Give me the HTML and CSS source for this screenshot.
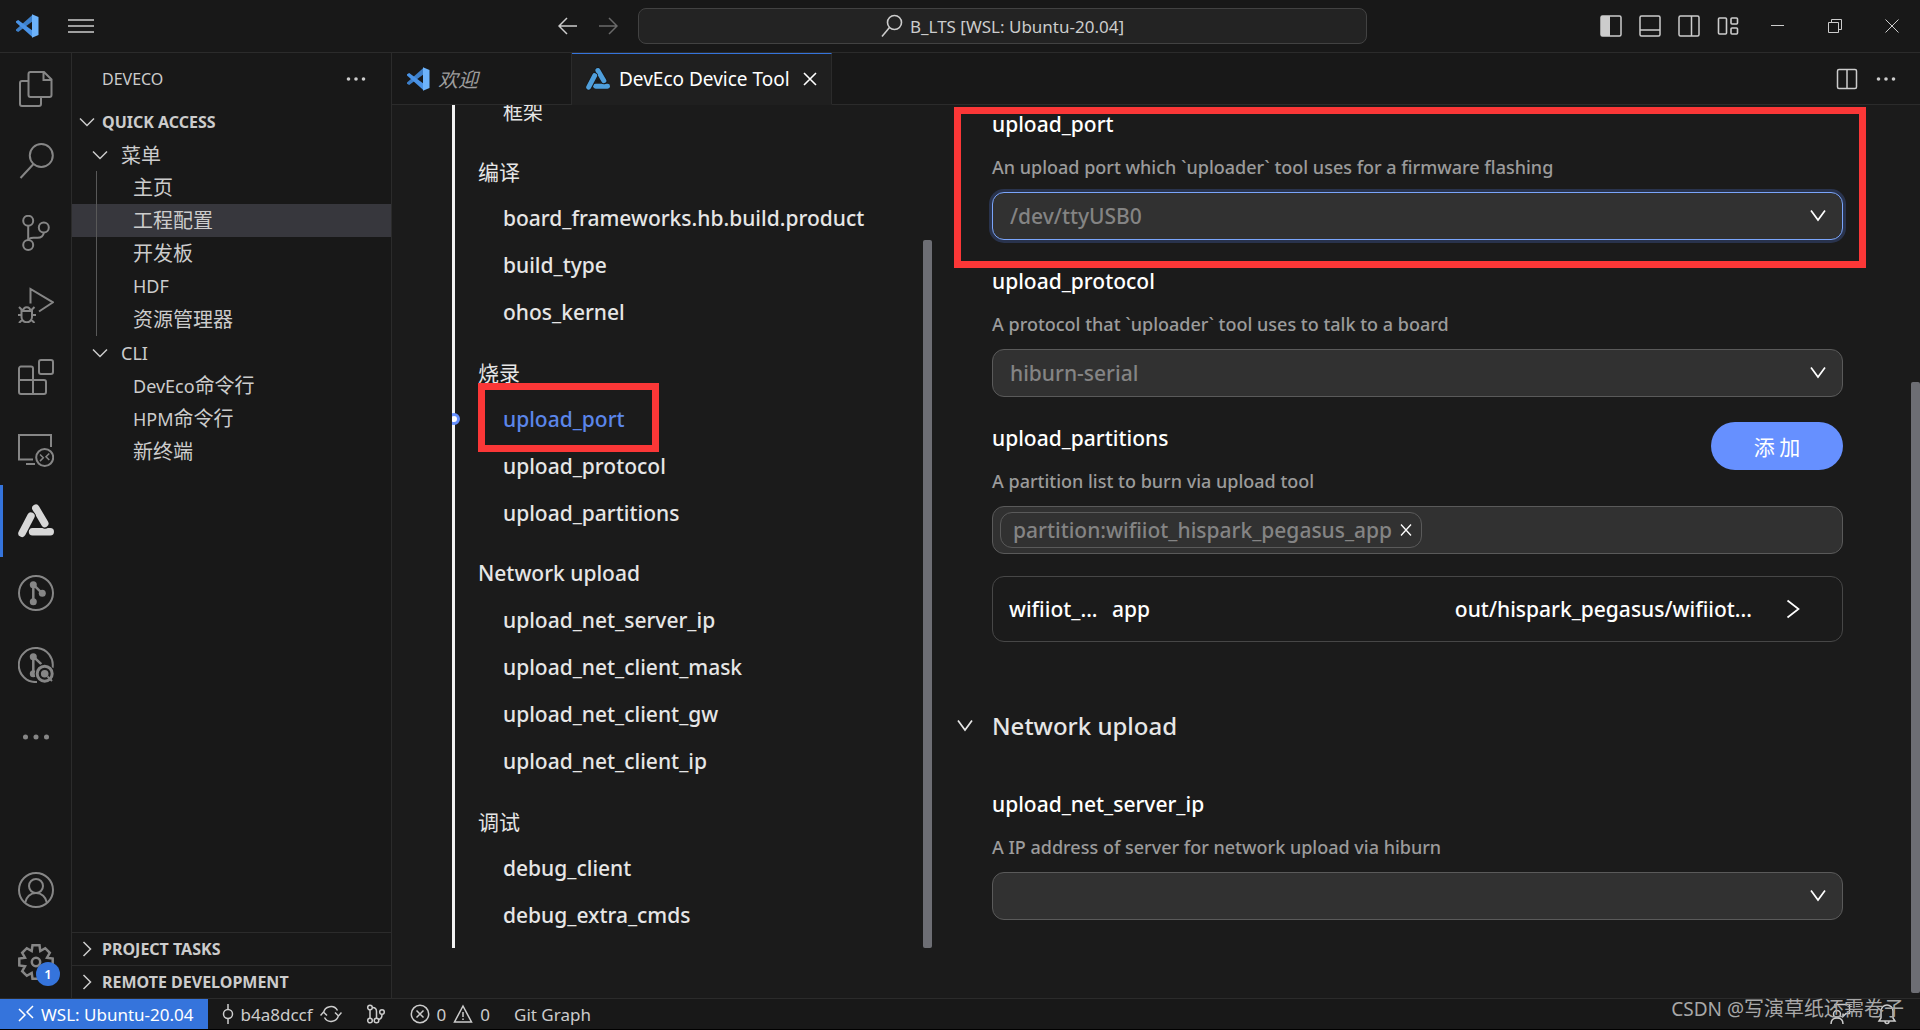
FILE: index.html
```html
<!DOCTYPE html>
<html lang="en">
<head>
  <meta charset="UTF-8">
  <meta name="viewport" content="width=device-width, initial-scale=1.0">
  <title>B_LTS [WSL: Ubuntu-20.04]</title>
  <link rel="stylesheet" href="styles.css">
</head>
<body>

  <!-- Shared icons -->
  <svg class="defs" width="0" height="0">
    <symbol id="vscode" viewBox="0 0 24 24">
      <path fill="#3d7fc9" d="M1 15.5 17 1.2v6.5L3.2 18 1 16.8z"/>
      <path fill="#4a93e6" d="M1 7.2 3.2 6 17 16.3v6.5L1 8.5z"/>
      <path fill="#6db3fb" d="M17 .3 23.5 3v18L17 23.7z"/>
    </symbol>
    <symbol id="down" viewBox="0 0 16 16">
      <path d="M1 4.5l7 7 7-7" fill="none" stroke="currentColor" stroke-width="1.5"/>
    </symbol>
    <symbol id="right" viewBox="0 0 16 16">
      <path d="M4.5 1l7 7-7 7" fill="none" stroke="currentColor" stroke-width="1.5"/>
    </symbol>
    <symbol id="vee" viewBox="0 0 16 16">
      <path d="M1 2.500l7 9.500 7-9.500" fill="none" stroke="currentColor" stroke-width="1.700"/>
    </symbol>
    <symbol id="next" viewBox="0 0 20 20">
      <path d="M4.500 1.500l11 8.500-11 8.500" fill="none" stroke="currentColor" stroke-width="1.700"/>
    </symbol>
    <symbol id="dots" viewBox="0 0 20 20">
      <g fill="currentColor"><circle cx="2.5" cy="10" r="1.8"/><circle cx="10" cy="10" r="1.8"/><circle cx="17.5" cy="10" r="1.8"/></g>
    </symbol>
    <symbol id="deveco" viewBox="0 0 36 36">
      <g fill="none" stroke-linecap="round">
        <path d="M14.5 28.8H32.3" stroke="currentColor" stroke-width="7.4"/>
        <path d="M17.8 5.2 27.3 21" class="gap" stroke-width="9.6"/>
        <path d="M17.8 5.2 26.8 20.5" stroke="currentColor" stroke-width="7.4"/>
        <path d="M13 13 4 30.3" class="gap" stroke-width="9.6"/>
        <path d="M13 13 4 30.3" stroke="currentColor" stroke-width="7.4"/>
      </g>
      <circle cx="18" cy="21" r="2.8" class="hole"/>
    </symbol>
  </svg>

  <!-- Title bar -->
  <header class="titlebar">
    <div class="title-left">
      <svg class="i24"><use href="#vscode"/></svg>
      <button class="icon-btn" aria-label="Menu">
        <svg width="26" height="26" viewBox="0 0 26 26"><path d="M0 7h26M0 13h26M0 19h26" stroke="currentColor" stroke-width="1.6"/></svg>
      </button>
    </div>
    <div class="title-center">
      <button class="icon-btn" aria-label="Back">
        <svg width="20" height="20" viewBox="0 0 20 20"><path d="M19 10H1.5M9 2l-8 8 8 8" fill="none" stroke="currentColor" stroke-width="1.5"/></svg>
      </button>
      <button class="icon-btn dim" aria-label="Forward">
        <svg width="20" height="20" viewBox="0 0 20 20"><path d="M1 10h17.5M11 2l8 8-8 8" fill="none" stroke="currentColor" stroke-width="1.5"/></svg>
      </button>
      <button class="command">
        <svg width="22" height="24" viewBox="0 0 22 24"><g fill="none" stroke="currentColor" stroke-width="1.6"><circle cx="13.5" cy="8.5" r="7"/><path d="M8.5 13.5 1 22.5"/></g></svg>
        <span>B_LTS [WSL: Ubuntu-20.04]</span>
      </button>
    </div>
    <div class="title-right">
      <div class="layouts">
        <button class="icon-btn" aria-label="Side bar"><svg width="22" height="22" viewBox="0 0 22 22"><rect x="1" y="1" width="20" height="20" rx="1.5" fill="none" stroke="currentColor" stroke-width="1.5"/><path d="M1 1h9v20H1z" fill="currentColor"/></svg></button>
        <button class="icon-btn" aria-label="Panel"><svg width="22" height="22" viewBox="0 0 22 22"><g fill="none" stroke="currentColor" stroke-width="1.5"><rect x="1" y="1" width="20" height="20" rx="1.5"/><path d="M1 15h20"/></g></svg></button>
        <button class="icon-btn" aria-label="Secondary side bar"><svg width="22" height="22" viewBox="0 0 22 22"><g fill="none" stroke="currentColor" stroke-width="1.5"><rect x="1" y="1" width="20" height="20" rx="1.5"/><path d="M13.5 1v20"/></g></svg></button>
        <button class="icon-btn" aria-label="Layout"><svg width="22" height="22" viewBox="0 0 22 22"><g fill="none" stroke="currentColor" stroke-width="1.6"><rect x="1.5" y="3" width="8" height="16" rx="1"/><rect x="14" y="3" width="6.5" height="6" rx="1"/><rect x="14" y="13" width="6.5" height="6" rx="1"/></g></svg></button>
      </div>
      <button class="win-btn" aria-label="Minimize"><svg width="14" height="14" viewBox="0 0 14 14"><path d="M0 6.5h13" stroke="currentColor"/></svg></button>
      <button class="win-btn" aria-label="Restore"><svg width="14" height="14" viewBox="0 0 14 14"><path d="M.5 3.5h10v10H.5zM3.5 3V.5h10v10H11" fill="none" stroke="currentColor"/></svg></button>
      <button class="win-btn" aria-label="Close"><svg width="14" height="14" viewBox="0 0 14 14"><path d="M.5.5l13 13M13.5.5l-13 13" stroke="currentColor"/></svg></button>
    </div>
  </header>

  <main class="workbench">
    <!-- Activity bar -->
    <nav class="activity">
      <button aria-label="Explorer"><svg viewBox="0 0 36 36"><path d="M12.5 1h13.5l7.500 7.500V24a2 2 0 0 1-2 2h-19a2 2 0 0 1-2-2V3a2 2 0 0 1 2-2zM25.500 1v8h8M10 10H4a2 2 0 0 0-2 2v21a2 2 0 0 0 2 2h17a2 2 0 0 0 2-2v-6"/></svg></button>
      <button aria-label="Search"><svg viewBox="0 0 36 36"><circle cx="23.300" cy="12.500" r="11.500"/><path d="M15.500 21 2.500 35"/></svg></button>
      <button aria-label="Source control"><svg viewBox="0 0 36 36"><circle cx="10.200" cy="5.800" r="5"/><circle cx="25.800" cy="12.600" r="5"/><circle cx="10.200" cy="30" r="5"/><path d="M10.200 11v14M25.800 17.600c-.5 3.400-2.800 5.200-6.300 5.200h-4c-3 0-5 1-5.300 3"/></svg></button>
      <button aria-label="Run"><svg viewBox="0 0 36 36"><path d="M12.500 16.500V2L35 15.300 21 24.500M3.500 24h10.500v6a5.200 5.200 0 0 1-10.500 0zM5 24a3.800 4.500 0 0 1 7.500 0M0 28h3.500M14 28h4M1 20l3 3M16.500 20l-3 3M1 36l3.500-3.500M16.500 36l-3.500-3.500"/></svg></button>
      <button aria-label="Extensions"><svg viewBox="0 0 36 36"><path d="M3 7.500h10a2 2 0 0 1 2 2V21h11a2 2 0 0 1 2 2v10a2 2 0 0 1-2 2H3a2 2 0 0 1-2-2V9.500a2 2 0 0 1 2-2zM1 21h14v14"/><rect x="21" y="1" width="14" height="14" rx="2"/></svg></button>
      <button aria-label="Remote explorer"><svg viewBox="0 0 36 36"><path d="M15 28.500H1V4h32v12M8 33h9"/><circle cx="26.700" cy="26.500" r="8.500"/><path d="M22 23.500l3.300 3.300-3.300 3.300M31.300 22.500l-3.300 3.200 3.300 3.300" stroke-width="1.500"/></svg></button>
      <button class="active" aria-label="DevEco"><svg class="logo"><use href="#deveco"/></svg></button>
      <button aria-label="GitLens"><svg viewBox="0 0 36 36"><circle cx="18" cy="18" r="17"/><path d="M15.300 9.700v17M15.300 9.700l9 8.600" stroke-width="2.500"/><g class="solid"><circle cx="15.300" cy="9.700" r="3.500"/><circle cx="15.300" cy="26.700" r="3.500"/><circle cx="24.300" cy="18.300" r="3.500"/></g></svg></button>
      <button aria-label="GitLens inspect"><svg viewBox="0 0 36 36"><path d="M34.500 21A17 17 0 1 0 19 35"/><path d="M15.300 9.700v17M15.300 9.700l8 7.500" stroke-width="2.500"/><g class="solid"><circle cx="15.300" cy="9.700" r="3.500"/><circle cx="15.300" cy="26.700" r="3.500"/><circle cx="26.700" cy="26.700" r="10" class="hole"/><circle cx="26.700" cy="26.700" r="3.800"/></g><circle cx="26.700" cy="26.700" r="7.500" stroke-width="3"/><path d="M29.500 29.500l4.500 4.500"/></svg></button>
      <button aria-label="More"><svg class="more"><use href="#dots"/></svg></button>
      <span class="spacer"></span>
      <button aria-label="Account"><svg viewBox="0 0 36 36"><circle cx="18" cy="18" r="17"/><circle cx="18" cy="14" r="7"/><path d="M7 31c1-6 5.500-10 11-10s10 4 11 10"/></svg></button>
      <button aria-label="Settings"><svg viewBox="0 0 36 36"><path stroke-width="2.500" d="M14.500 1.300h7l.8 5.700 4.900-2.800 4.600 4.600-2.800 4.900 5.700.8v7l-5.700.8 2.800 4.900-4.600 4.600-4.900-2.800-.8 5.700h-7l-.8-5.700-4.900 2.800-4.600-4.600L7 22.300l-5.700-.8v-7l5.700-.8-2.800-4.900 4.600-4.600L13.700 7z"/><circle cx="18" cy="18" r="4.200" stroke-width="2.500"/></svg><span class="badge">1</span></button>
    </nav>

    <!-- Side bar -->
    <aside class="sidebar">
      <div class="side-title">
        <h2>DEVECO</h2>
        <button class="icon-btn" aria-label="More actions"><svg class="i20"><use href="#dots"/></svg></button>
      </div>
      <button class="pane-head"><svg class="i16"><use href="#down"/></svg>QUICK ACCESS</button>
      <ul class="tree">
        <li class="branch"><svg class="i16"><use href="#down"/></svg><span lang="zh">菜单</span></li>
        <li>
          <ul class="leaves guide">
            <li lang="zh">主页</li>
            <li lang="zh" class="selected">工程配置</li>
            <li lang="zh">开发板</li>
            <li>HDF</li>
            <li lang="zh">资源管理器</li>
          </ul>
        </li>
        <li class="branch"><svg class="i16"><use href="#down"/></svg>CLI</li>
        <li>
          <ul class="leaves">
            <li>DevEco<span lang="zh">命令行</span></li>
            <li>HPM<span lang="zh">命令行</span></li>
            <li lang="zh">新终端</li>
          </ul>
        </li>
      </ul>
      <button class="pane-head line"><svg class="i16"><use href="#right"/></svg>PROJECT TASKS</button>
      <button class="pane-head line"><svg class="i16"><use href="#right"/></svg>REMOTE DEVELOPMENT</button>
    </aside>

    <!-- Editor -->
    <section class="editor">
      <div class="tabs">
        <div class="tab welcome"><svg class="i24"><use href="#vscode"/></svg><em lang="zh">欢迎</em></div>
        <div class="tab current">
          <svg class="i24 blue"><use href="#deveco"/></svg>
          <span>DevEco Device Tool</span>
          <button class="icon-btn" aria-label="Close tab"><svg width="14" height="14" viewBox="0 0 14 14"><path d="M1 1l12 12M13 1L1 13" stroke="currentColor" stroke-width="1.600"/></svg></button>
        </div>
        <div class="tab-actions">
          <button class="icon-btn" aria-label="Split editor"><svg width="22" height="22" viewBox="0 0 22 22"><g fill="none" stroke="currentColor" stroke-width="1.500"><rect x="1.500" y="1.500" width="19" height="19" rx="1.500"/><path d="M11 1.500v19"/></g></svg></button>
          <button class="icon-btn" aria-label="More actions"><svg class="i20"><use href="#dots"/></svg></button>
        </div>
      </div>

      <div class="page">
        <nav class="anchors">
          <ul>
            <li><a href="#" lang="zh">框架</a></li>
          </ul>
          <h3 lang="zh">编译</h3>
          <ul>
            <li><a href="#">board_frameworks.hb.build.product</a></li>
            <li><a href="#">build_type</a></li>
            <li><a href="#">ohos_kernel</a></li>
          </ul>
          <h3 lang="zh">烧录</h3>
          <ul>
            <li class="here"><a href="#">upload_port</a><span class="mark"></span></li>
            <li><a href="#">upload_protocol</a></li>
            <li><a href="#">upload_partitions</a></li>
          </ul>
          <h3>Network upload</h3>
          <ul>
            <li><a href="#">upload_net_server_ip</a></li>
            <li><a href="#">upload_net_client_mask</a></li>
            <li><a href="#">upload_net_client_gw</a></li>
            <li><a href="#">upload_net_client_ip</a></li>
          </ul>
          <h3 lang="zh">调试</h3>
          <ul>
            <li><a href="#">debug_client</a></li>
            <li><a href="#">debug_extra_cmds</a></li>
          </ul>
          <span class="thumb"></span>
        </nav>

        <form class="settings">
          <div class="field">
            <label for="port">upload_port</label>
            <p>An upload port which `uploader` tool uses for a firmware flashing</p>
            <div class="select focus">
              <select id="port"><option>/dev/ttyUSB0</option></select>
              <svg class="i16"><use href="#vee"/></svg>
            </div>
            <span class="mark"></span>
          </div>
          <div class="field">
            <label for="protocol">upload_protocol</label>
            <p>A protocol that `uploader` tool uses to talk to a board</p>
            <div class="select">
              <select id="protocol"><option>hiburn-serial</option></select>
              <svg class="i16"><use href="#vee"/></svg>
            </div>
          </div>
          <div class="field">
            <div class="with-button">
              <div>
                <label for="partition">upload_partitions</label>
                <p>A partition list to burn via upload tool</p>
              </div>
              <button type="button" class="add" lang="zh">添 加</button>
            </div>
            <div class="tags">
              <span class="tag">partition:wifiiot_hispark_pegasus_app
                <button type="button" class="icon-btn" id="partition" aria-label="Remove"><svg width="12" height="12" viewBox="0 0 12 12"><path d="M1 .5l10 11M11 .5L1 11.500" stroke="currentColor" stroke-width="1.300"/></svg></button>
              </span>
            </div>
            <button type="button" class="card">
              <span class="name">wifiiot_...</span>
              <span class="kind">app</span>
              <span>out/hispark_pegasus/wifiiot...</span>
              <svg class="i20"><use href="#next"/></svg>
            </button>
          </div>
          <h2><svg class="i16"><use href="#vee"/></svg>Network upload</h2>
          <div class="field">
            <label for="server">upload_net_server_ip</label>
            <p>A IP address of server for network upload via hiburn</p>
            <div class="select">
              <select id="server"><option></option></select>
              <svg class="i16"><use href="#vee"/></svg>
            </div>
          </div>
          <span class="thumb"></span>
        </form>
      </div>
    </section>
  </main>

  <!-- Status bar -->
  <footer class="status">
    <button class="remote"><svg width="16" height="18" viewBox="0 0 16 18"><path d="M1 4l6 6-6 6M15 1L9 7l6 6" fill="none" stroke="currentColor" stroke-width="1.500"/></svg>WSL: Ubuntu-20.04</button>
    <button class="commit">
      <svg width="12" height="20" viewBox="0 0 12 20"><g fill="none" stroke="currentColor" stroke-width="1.500"><circle cx="6" cy="10" r="4.500"/><path d="M6 0v5.500M6 14.500V20"/></g></svg>
      b4a8dccf
      <svg width="22" height="20" viewBox="0 0 22 20"><path d="M3.500 9a7.500 7.500 0 0 1 14-2.500M18.500 11a7.500 7.500 0 0 1-14 2.500M.5 11.500l3-3.500 3.500 3.500M21.500 8.500l-3 3.500-3.500-3.500" fill="none" stroke="currentColor" stroke-width="1.500"/></svg>
    </button>
    <button aria-label="Graph"><svg width="20" height="20" viewBox="0 0 20 20"><g fill="none" stroke="currentColor" stroke-width="1.500"><circle cx="4" cy="3.500" r="2.300"/><circle cx="4" cy="16.500" r="2.300"/><circle cx="10.500" cy="16.500" r="2.300"/><circle cx="16" cy="8" r="2.300"/><path d="M4 6v8M6.500 3.500q4 0 4 4V14M16 10.500q0 4.500-3.500 5"/></g></svg></button>
    <button class="problems">
      <svg width="20" height="20" viewBox="0 0 20 20"><g fill="none" stroke="currentColor" stroke-width="1.500"><circle cx="10" cy="10" r="8.700"/><path d="M6.500 6.500l7 7M13.500 6.500l-7 7"/></g></svg>0
      <svg width="20" height="20" viewBox="0 0 20 20"><path d="M10 2l8.500 16h-17zM10 8v5M10 14.500v1.500" fill="none" stroke="currentColor" stroke-width="1.500"/></svg>0
    </button>
    <button>Git Graph</button>
    <div class="status-right">
      <svg width="22" height="22" viewBox="0 0 22 22"><g fill="none" stroke="currentColor" stroke-width="1.500"><circle cx="8" cy="11" r="3.500"/><path d="M2 21c0-4 2.500-6 6-6s6 2 6 6M6 5V1.500h14.500v9H17l-3 3v-3"/></g></svg>
      <svg width="22" height="22" viewBox="0 0 22 22"><path d="M3 18h16l-2-3V8a6 6 0 0 0-12 0v7zM9 18.500a2 2 0 0 0 4 0" fill="none" stroke="currentColor" stroke-width="1.500"/></svg>
    </div>
    <span class="watermark">CSDN @<span lang="zh">写演草纸还需卷子</span></span>
  </footer>
</body>
</html>
```
FILE: styles.css
```css
*, *::before {
  box-sizing: border-box;
}

body {
  margin: 0;
  height: 100vh;
  display: flex;
  flex-direction: column;
  overflow: hidden;
  background: #181818;
  color: #cccccc;
  font-family: "Noto Sans", "Noto Sans CJK SC", sans-serif;
  font-size: 18px;
  border-bottom: 1px solid #000;
}

[lang="zh"] {
  font-family: "Noto Sans CJK SC", sans-serif;
  font-size: 20px;
  font-weight: 400;
}

ul {
  list-style: none;
  margin: 0;
  padding: 0;
}

h2, h3, p {
  margin: 0;
  font-weight: inherit;
}

button {
  font: inherit;
  color: inherit;
  background: none;
  border: none;
  padding: 0;
}

svg {
  display: block;
  flex: none;
}

.defs { position: absolute; }
.i16 { width: 16px; height: 16px; }
.i20 { width: 20px; height: 20px; }
.i24 { width: 24px; height: 24px; }
.gap { stroke: #181818; }
.hole { fill: #181818; }
.blue { color: #4f9fdc; }

.spacer {
  flex: 1;
}

/* Title bar */
.titlebar {
  display: flex;
  height: 53px;
  flex: none;
  align-items: center;
  border-bottom: 1px solid #2b2b2b;
}

.title-left {
  flex: 1;
  display: flex;
  align-items: center;
  gap: 29px;
  padding-left: 5px;
}

.title-left .i24 {
  margin-left: 10px;
}

.title-center {
  display: flex;
  align-items: center;
  gap: 20px;
}

.dim {
  color: #6a6a6a;
}

.command {
  display: flex;
  align-items: center;
  justify-content: center;
  gap: 7px;
  width: 38vw;
  height: 36px;
  border: 1px solid #424242;
  border-radius: 8px;
  background: #232323;
  font-size: 17px;
}

.title-right {
  flex: 1;
  display: flex;
  align-items: center;
  justify-content: flex-end;
}

.layouts {
  display: flex;
  gap: 17px;
  padding-right: 10px;
}

.win-btn {
  width: 57px;
  display: flex;
  justify-content: center;
}

/* Workbench */
.workbench {
  flex: 1;
  min-height: 0;
  display: flex;
}

.activity {
  width: 72px;
  flex: none;
  display: flex;
  flex-direction: column;
  border-right: 1px solid #2b2b2b;
  color: #868686;
}

.activity button {
  position: relative;
  height: 72px;
  padding-left: 18px;
}

.activity svg {
  width: 36px;
  height: 36px;
  fill: none;
  stroke: currentColor;
  stroke-width: 2;
}

.activity .solid {
  fill: currentColor;
  stroke: none;
}

.activity .solid .hole {
  fill: #181818;
}

.activity .more {
  width: 28px;
  height: 28px;
  margin-left: 4px;
  stroke: none;
}

.activity .logo {
  stroke: none;
}

.activity .active {
  color: #d7d7d7;
  border-left: 3px solid #3574dc;
  padding-left: 15px;
}

.badge {
  position: absolute;
  left: 36px;
  top: 36px;
  width: 24px;
  height: 24px;
  border-radius: 50%;
  background: #3574dc;
  color: #fff;
  font-size: 13px;
  font-weight: 600;
  line-height: 24px;
  text-align: center;
}

/* Side bar */
.sidebar {
  width: 320px;
  flex: none;
  display: flex;
  flex-direction: column;
  border-right: 1px solid #2b2b2b;
}

.side-title {
  height: 52px;
  display: flex;
  align-items: center;
  justify-content: space-between;
  padding: 0 25px 0 30px;
}

.side-title h2 {
  font-size: 16px;
}

.pane-head {
  display: flex;
  align-items: center;
  gap: 7px;
  height: 33px;
  padding-left: 7px;
  font-size: 16px;
  font-weight: 700;
}

.line {
  border-top: 1px solid #2b2b2b;
}

.tree {
  flex: 1;
}

.branch {
  display: flex;
  align-items: center;
  gap: 13px;
  height: 33px;
  padding-left: 20px;
}

.leaves {
  position: relative;
}

.leaves li {
  height: 33px;
  line-height: 32px;
  padding-left: 61px;
}

.guide::before {
  content: "";
  position: absolute;
  left: 24px;
  top: 0;
  bottom: 0;
  width: 1px;
  background: #585858;
}

.selected {
  background: #37373d;
}

/* Tabs */
.editor {
  flex: 1;
  min-width: 0;
  display: flex;
  flex-direction: column;
}

.tabs {
  display: flex;
  height: 52px;
  flex: none;
}

.tab {
  display: flex;
  align-items: center;
  padding: 0 14px;
  border-right: 1px solid #2b2b2b;
  border-bottom: 1px solid #2b2b2b;
}

.welcome {
  width: 180px;
  gap: 8px;
  color: #9d9d9d;
}

.current {
  gap: 9px;
  color: #fff;
  background: #1f1f1f;
  border-top: 1px solid #3574dc;
  border-bottom-color: #1f1f1f;
  font-size: 19px;
}

.current .icon-btn {
  margin-left: 4px;
}

.tab-actions {
  flex: 1;
  display: flex;
  align-items: center;
  justify-content: flex-end;
  gap: 18px;
  padding-right: 24px;
  border-bottom: 1px solid #2b2b2b;
}

/* Page */
.page {
  flex: 1;
  min-height: 0;
  display: flex;
  background: #1b1b1b;
  font-size: 21px;
  font-weight: 500;
}

.anchors {
  position: relative;
  width: 480px;
  margin: 0 22px 50px 60px;
  padding: 0 0 9px 26px;
  flex: none;
  display: flex;
  flex-direction: column;
  justify-content: flex-end;
  overflow: hidden;
  box-shadow: inset 3px 0 #f2f2f2;
  color: #e6e6e6;
}

.anchors h3 {
  margin-top: 13px;
  font-size: 21px;
  line-height: 47px;
}

.anchors li {
  position: relative;
  height: 47px;
  line-height: 47px;
  padding-left: 25px;
}

.anchors a {
  color: inherit;
  text-decoration: none;
}

.anchors .here {
  color: #5b86ea;
}

/* progress dot on the rail */
.here::before {
  content: "";
  position: absolute;
  left: -30px;
  top: 17px;
  width: 12px;
  height: 12px;
  border: 3px solid #6690ff;
  border-radius: 50%;
  background: #fff;
}

.mark {
  position: absolute;
  border: 7px solid #fb3737;
  pointer-events: none;
}

.here .mark {
  left: 0;
  top: -13px;
  width: 181px;
  height: 69px;
}

.thumb {
  position: absolute;
  right: 0;
  width: 9px;
  border-radius: 2px;
  background: #6d6e74;
}

.anchors .thumb {
  top: 16%;
  bottom: 0;
}

/* Settings form */
.settings {
  position: relative;
  flex: 1;
  padding: 3px 77px 0 38px;
}

.settings .thumb {
  top: 31%;
  bottom: 5px;
}

.field {
  position: relative;
  margin-bottom: 25px;
}

.field label {
  display: block;
  line-height: 32px;
  color: #fff;
}

.field p {
  margin: 13px 0 10px;
  font-size: 18px;
  line-height: 29px;
  color: #9b9b9b;
}

.field > .mark {
  inset: -1px -23px -28px -38px;
}

.select {
  position: relative;
}

.select select {
  display: block;
  width: 100%;
  height: 48px;
  padding: 0 17px;
  appearance: none;
  border: 1px solid #5a5a5a;
  border-radius: 12px;
  background: #313131;
  color: #848484;
  font: inherit;
}

.focus select {
  border-color: #7aa5fb;
  box-shadow: 0 0 0 3px #29334d;
}

.select svg {
  position: absolute;
  right: 17px;
  top: 16px;
  color: #fff;
}

.with-button {
  display: flex;
  justify-content: space-between;
}

.add {
  width: 132px;
  height: 48px;
  border-radius: 24px;
  background: #6690ff;
  color: #fff;
  font-size: 21px;
}

.tags {
  height: 48px;
  padding: 5px 7px;
  border: 1px solid #5a5a5a;
  border-radius: 12px;
  background: #313131;
}

.tag {
  display: inline-flex;
  align-items: center;
  gap: 8px;
  height: 36px;
  padding: 0 9px 0 12px;
  border: 1px solid #5a5a5a;
  border-radius: 12px;
  color: #848484;
}

.tag .icon-btn {
  color: #fff;
}

.card {
  display: flex;
  align-items: center;
  width: 100%;
  height: 66px;
  margin-top: 22px;
  padding: 0 39px 0 16px;
  border: 1px solid #474747;
  border-radius: 12px;
  color: #fff;
}

.name {
  width: 103px;
  text-align: left;
}

.kind {
  flex: 1;
  text-align: left;
}

.card svg {
  margin-left: 31px;
}

.settings h2 {
  display: flex;
  align-items: center;
  gap: 19px;
  margin: 64px 0 42px -35px;
  font-size: 24px;
  line-height: 40px;
  color: #e6e6e6;
}

/* Status bar */
.status {
  position: relative;
  display: flex;
  align-items: center;
  flex: none;
  gap: 24px;
  height: 31px;
  border-top: 1px solid #2b2b2b;
  font-size: 17px;
}

.status button {
  display: flex;
  align-items: center;
  gap: 7px;
}

.status .remote {
  height: 31px;
  padding: 0 14px 0 18px;
  background: #3574dc;
  color: #fff;
}

.status .commit {
  margin-left: -10px;
}

.status-right {
  flex: 1;
  display: flex;
  justify-content: flex-end;
  gap: 25px;
  padding-right: 22px;
}

.watermark {
  position: absolute;
  right: 16px;
  bottom: 6px;
  font-size: 19px;
  line-height: 28px;
  color: #a8a8a8;
}
```
